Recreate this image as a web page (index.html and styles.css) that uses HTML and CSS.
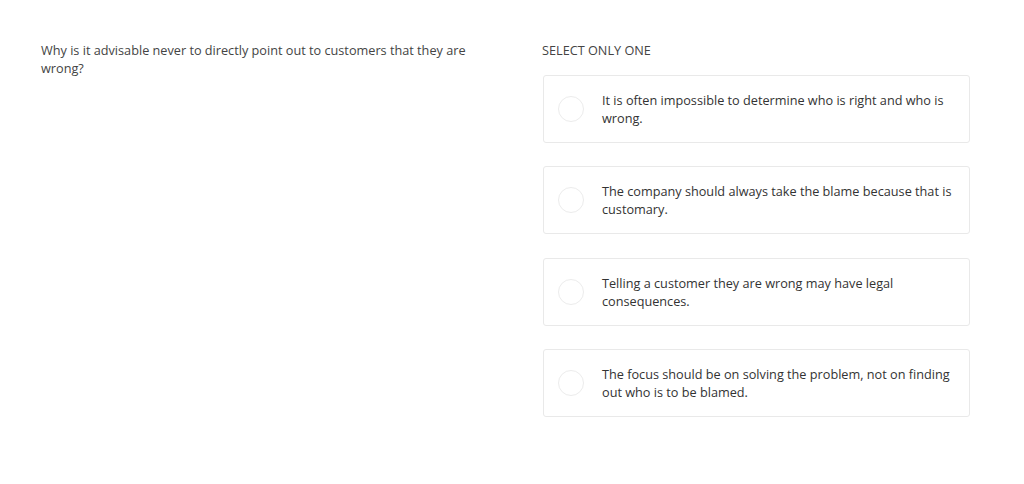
FILE: index.html
```html
<!DOCTYPE html>
<html>
<head>
<meta charset="utf-8">
<link rel="stylesheet" href="styles.css">
</head>
<body>
<div class="page">
  <div class="question">Why is it advisable never to directly point out to customers that they are wrong?</div>
  <div class="answers">
    <div class="caption">SELECT ONLY ONE</div>
    <div class="options">
      <div class="option"><span class="radio"></span><span class="label">It is often impossible to determine who is right and who is wrong.</span></div>
      <div class="option"><span class="radio"></span><span class="label">The company should always take the blame because that is customary.</span></div>
      <div class="option"><span class="radio"></span><span class="label">Telling a customer they are wrong may have legal consequences.</span></div>
      <div class="option"><span class="radio"></span><span class="label">The focus should be on solving the problem, not on finding out who is to be blamed.</span></div>
    </div>
  </div>
</div>
</body>
</html>
```
FILE: styles.css
```css
html, body {
  margin: 0;
  padding: 0;
  background: #fff;
}
body {
  font-family: "Open Sans", "Liberation Sans", sans-serif;
  font-size: 12.7px;
  line-height: 18px;
  color: #3a3a3a;
}
.page {
  display: flex;
  padding: 41px 0 0 41px;
}
.question {
  width: 440px;
  color: #444;
}
.answers {
  margin-left: 62px;
  width: 427px;
}
.caption {
  color: #444;
  margin-left: -1px;
  margin-bottom: 16px;
}
.options {
  display: flex;
  flex-direction: column;
  gap: 23.33px;
}
.option {
  display: flex;
  align-items: center;
  border: 1px solid #e9e9e9;
  border-radius: 3px;
  padding: 15px 12px 15px 14px;
  min-height: 36px;
}
.radio {
  flex: none;
  width: 24px;
  height: 24px;
  border: 1px solid #ececec;
  border-radius: 50%;
  margin-right: 18px;
}
.label {
  color: #333;
}
```
